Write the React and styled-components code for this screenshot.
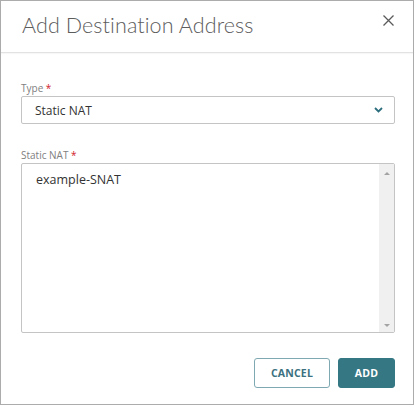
import styled, { createGlobalStyle } from 'styled-components';

const GlobalStyle = createGlobalStyle`
  html, body {
    margin: 0;
    padding: 0;
    background: #ffffff;
  }
  * {
    box-sizing: border-box;
  }
`

const Dialog = styled.div`
  width: 414px;
  height: 405px;
  border: 1px solid #acacac;
  background: #ffffff;
  display: flex;
  flex-direction: column;
  font-family: "Open Sans", "Liberation Sans", sans-serif;
`

const Header = styled.div`
  height: 59px;
  display: flex;
  align-items: center;
  justify-content: space-between;
  padding: 0 19px 0 21px;
  border-bottom: 1px solid #e2e2e2;
  box-shadow: 0 1px 1px rgba(0, 0, 0, 0.03);
`

const Title = styled.h2`
  margin: 0 0 3px 0;
  font-family: "Lato", "Open Sans", sans-serif;
  font-weight: 300;
  font-size: 21.5px;
  letter-spacing: 0.1px;
  color: #5c5c5c;
`

const CloseButton = styled.button`
  border: none;
  background: none;
  padding: 0;
  margin-bottom: 12px;
  width: 12px;
  height: 12px;
  display: flex;
  align-items: center;
  justify-content: center;
  cursor: pointer;
`

const Body = styled.div`
  flex: 1;
  display: flex;
  flex-direction: column;
  padding: 28px 18px 0 20px;
`

const Field = styled.div`
  display: flex;
  flex-direction: column;
  margin-bottom: ${p => p.$gap || 0}px;
`

const Label = styled.label`
  font-size: 10px;
  line-height: 14px;
  color: #808080;
  margin-bottom: 1px;

  span {
    color: #d0202a;
  }
`

const Select = styled.div`
  height: 28px;
  border: 1px solid #c4c4c4;
  border-radius: 2px;
  display: flex;
  align-items: center;
  justify-content: space-between;
  padding: 0 11px 0 13px;
  font-size: 12px;
  color: #333333;
`

const ListBox = styled.div`
  height: 170px;
  border: 1px solid #c4c4c4;
  border-radius: 2px;
  display: flex;
`

const ListText = styled.div`
  flex: 1;
  padding: 7px 14px;
  font-size: 12.5px;
  color: #333333;
`

const ScrollTrack = styled.div`
  width: 15px;
  background: #f0f0f0;
  display: flex;
  flex-direction: column;
  justify-content: space-between;
  align-items: center;
  padding: 8px 0 5px;
`

const Arrow = styled.div`
  width: 0;
  height: 0;
  border-left: 3px solid transparent;
  border-right: 3px solid transparent;
  ${p => p.$down
    ? 'border-top: 3px solid #a3a3a3;'
    : 'border-bottom: 3px solid #a3a3a3;'}
`

const Footer = styled.div`
  display: flex;
  justify-content: flex-end;
  gap: 8px;
  padding: 25px 18px 16px 0;
`

const Button = styled.button`
  height: 30px;
  min-width: ${p => p.$width}px;
  border-radius: 3px;
  font-family: "Open Sans", "Liberation Sans", sans-serif;
  font-weight: 700;
  font-size: 10.5px;
  letter-spacing: 0.2px;
  cursor: pointer;
  border: 1px solid ${p => p.$primary ? '#347884' : '#7ea9b2'};
  background: ${p => p.$primary ? '#357884' : '#ffffff'};
  color: ${p => p.$primary ? '#ffffff' : '#3b7180'};
`

export default function App() {
  return (
    <>
      <GlobalStyle />
      <Dialog>
        <Header>
          <Title>Add Destination Address</Title>
          <CloseButton aria-label="Close">
            <svg width="11" height="11" viewBox="0 0 11 11">
              <path d="M0.5 0.5 L10.5 10.5 M10.5 0.5 L0.5 10.5" stroke="#5a5a5a" strokeWidth="1.3" />
            </svg>
          </CloseButton>
        </Header>
        <Body>
          <Field $gap={24}>
            <Label>Type <span>*</span></Label>
            <Select>
              Static NAT
              <svg width="9" height="6" viewBox="0 0 9 6">
                <path d="M1 1 L4.5 4.5 L8 1" fill="none" stroke="#2d6e7e" strokeWidth="1.8" />
              </svg>
            </Select>
          </Field>
          <Field>
            <Label>Static NAT <span>*</span></Label>
            <ListBox>
              <ListText>example-SNAT</ListText>
              <ScrollTrack>
                <Arrow />
                <Arrow $down />
              </ScrollTrack>
            </ListBox>
          </Field>
        </Body>
        <Footer>
          <Button $width={76}>CANCEL</Button>
          <Button $primary $width={57}>ADD</Button>
        </Footer>
      </Dialog>
    </>
  )
}
